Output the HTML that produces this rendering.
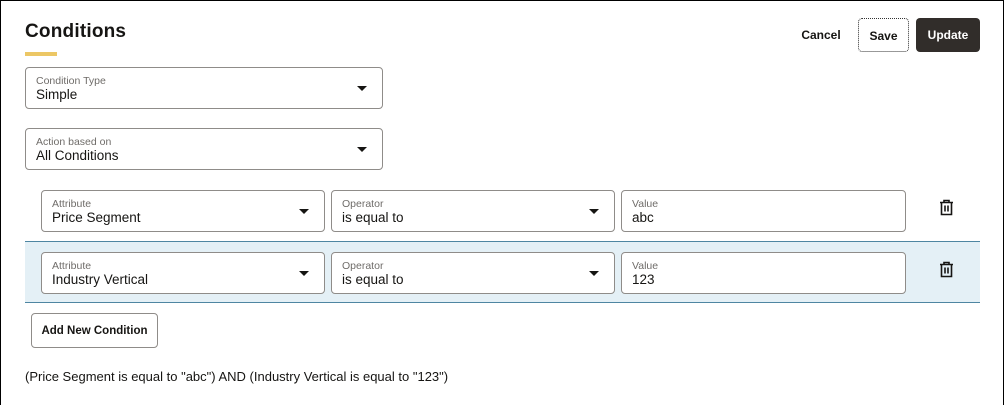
<!DOCTYPE html>
<html><head><style>
*{box-sizing:border-box;margin:0;padding:0}
body{width:1005px;height:405px;background:#fff;font-family:"Liberation Sans",sans-serif;color:#161513;position:relative;overflow:hidden}
.frame{position:absolute;left:0;top:0;width:1004px;height:405px;border:1px solid #000;border-bottom:none}
.abs{position:absolute}
h1{position:absolute;left:25px;top:21px;font-size:19px;font-weight:bold;letter-spacing:0.2px}
.bar{left:25px;top:52px;width:32px;height:4px;background:#ecc765}
.f{position:absolute;border:1px solid #8f8c89;border-radius:4px;background:#fff;height:42px}
.f .l{position:absolute;left:10px;top:7px;font-size:10.5px;color:#6f6c69}
.f .v{position:absolute;left:10px;top:19px;font-size:13.5px;color:#161513}
.f .c{position:absolute;right:15px;top:18px;width:0;height:0;border-left:5px solid transparent;border-right:5px solid transparent;border-top:5px solid #161513}
.btn{position:absolute;font-size:12px;font-weight:bold;text-align:center;line-height:34px;border-radius:4px}
.trash{position:absolute}
</style></head><body>
<div class="frame"></div>
<h1>Conditions</h1>
<div class="abs bar"></div>
<div class="btn" style="left:796px;top:18px;width:50px;height:34px;color:#161513">Cancel</div>
<div class="btn" style="left:858px;top:18px;width:51px;height:34px;border:1px dotted #333;">Save</div>
<div class="btn" style="left:916px;top:18px;width:64px;height:34px;background:#312d2a;color:#fff">Update</div>

<div class="f" style="left:25px;top:67px;width:358px"><span class="l">Condition Type</span><span class="v">Simple</span><span class="c"></span></div>
<div class="f" style="left:25px;top:128px;width:358px"><span class="l">Action based on</span><span class="v">All Conditions</span><span class="c"></span></div>

<div class="abs" style="left:25px;top:241px;width:955px;height:62px;background:#e4f0f6;border-top:1px solid #4e86a2;border-bottom:1px solid #4e86a2"></div>

<div class="f" style="left:41px;top:190px;width:284px"><span class="l">Attribute</span><span class="v">Price Segment</span><span class="c"></span></div>
<div class="f" style="left:331px;top:190px;width:284px"><span class="l">Operator</span><span class="v">is equal to</span><span class="c"></span></div>
<div class="f" style="left:621px;top:190px;width:285px"><span class="l">Value</span><span class="v">abc</span></div>

<div class="f" style="left:41px;top:252px;width:284px"><span class="l">Attribute</span><span class="v">Industry Vertical</span><span class="c"></span></div>
<div class="f" style="left:331px;top:252px;width:284px"><span class="l">Operator</span><span class="v">is equal to</span><span class="c"></span></div>
<div class="f" style="left:621px;top:252px;width:285px"><span class="l">Value</span><span class="v">123</span></div>

<svg class="trash" style="left:938px;top:199px" width="17" height="17" viewBox="0 0 17 17"><path d="M2 3.5h13M6 3.5V1.5h5v2M3.5 3.5v12h10v-12M7 6.5v6M10 6.5v6" fill="none" stroke="#161513" stroke-width="1.6"/></svg>
<svg class="trash" style="left:938px;top:261px" width="17" height="17" viewBox="0 0 17 17"><path d="M2 3.5h13M6 3.5V1.5h5v2M3.5 3.5v12h10v-12M7 6.5v6M10 6.5v6" fill="none" stroke="#161513" stroke-width="1.6"/></svg>

<div class="btn" style="left:31px;top:313px;width:127px;height:35px;border:1px solid #8f8c89;font-size:11.5px">Add New Condition</div>
<div class="abs" style="left:25px;top:369px;font-size:13px">(Price Segment is equal to "abc") AND (Industry Vertical is equal to "123")</div>
</body></html>
